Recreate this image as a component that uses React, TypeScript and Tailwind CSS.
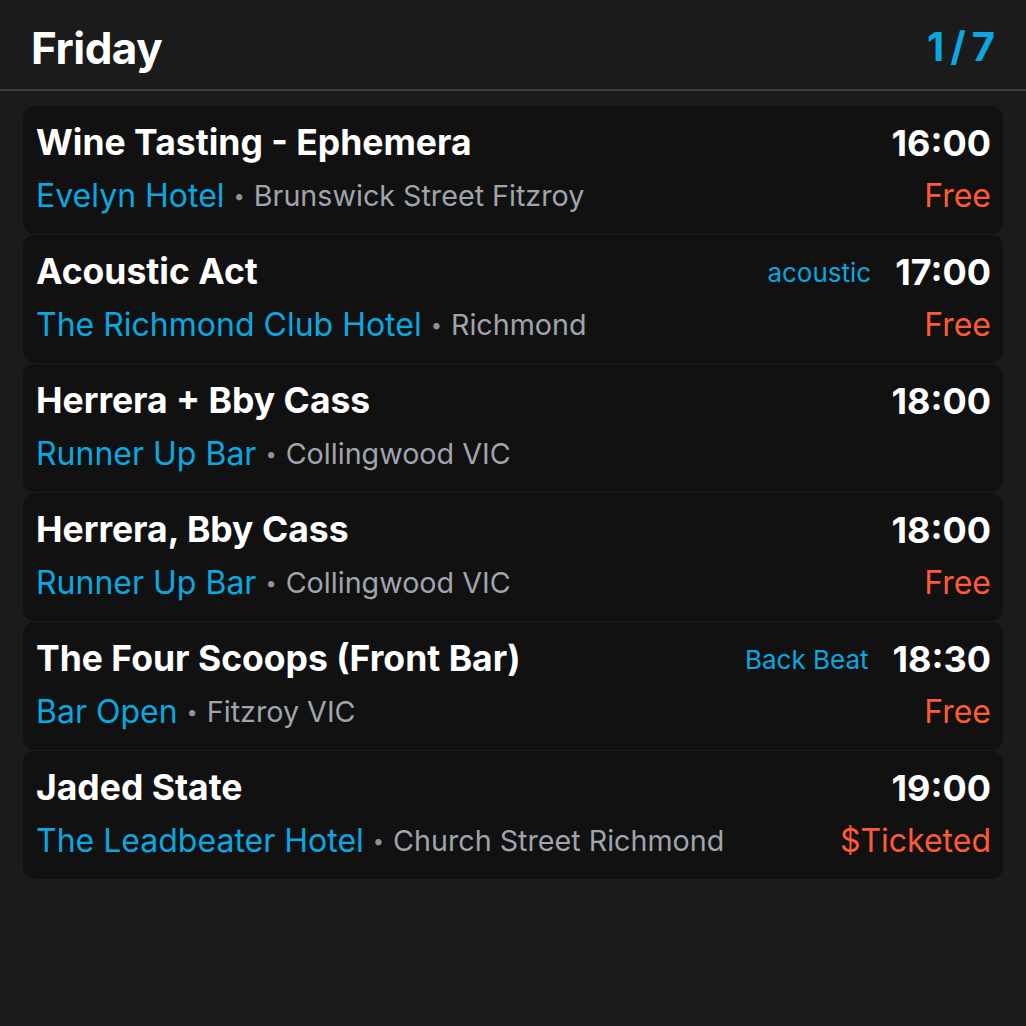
const events = [
  { title: 'Wine Tasting - Ephemera', venue: 'Evelyn Hotel', area: 'Brunswick Street Fitzroy', time: '16:00', price: 'Free' },
  { title: 'Acoustic Act', venue: 'The Richmond Club Hotel', area: 'Richmond', time: '17:00', price: 'Free', tag: 'acoustic' },
  { title: 'Herrera + Bby Cass', venue: 'Runner Up Bar', area: 'Collingwood VIC', time: '18:00', price: '' },
  { title: 'Herrera, Bby Cass', venue: 'Runner Up Bar', area: 'Collingwood VIC', time: '18:00', price: 'Free' },
  { title: 'The Four Scoops (Front Bar)', venue: 'Bar Open', area: 'Fitzroy VIC', time: '18:30', price: 'Free', tag: 'Back Beat' },
  { title: 'Jaded State', venue: 'The Leadbeater Hotel', area: 'Church Street Richmond', time: '19:00', price: '$Ticketed' },
];

export default function App() {
  return (
    <div
      className="w-[1026px] h-[1026px] bg-[#1b1b1b] overflow-hidden"
      style={{ fontFamily: 'Inter, "Noto Sans", sans-serif' }}
    >
      {/* Header */}
      <div className="h-[91px] flex items-center justify-between pl-[31px] pr-[31px] border-b-2 border-[#3a3e47]">
        <h1 className="text-[44px] font-bold text-white tracking-[-0.5px] leading-none pt-[6px]">Friday</h1>
        <div className="flex items-center gap-[6px] text-[40px] font-bold text-[#0aa8e0] leading-none pt-[4px]">
          <span>1</span>
          <span>/</span>
          <span>7</span>
        </div>
      </div>

      {/* Lista */}
      <div className="flex flex-col gap-[1px] px-[23px] pt-[15px]">
        {events.map((e, i) => (
          <div key={i} className="h-[128px] bg-[#111111] rounded-[12px] pl-[13px] pr-[12px] pt-[17px] flex flex-col">
            <div className="flex items-center justify-between h-[40px]">
              <div className="text-[35.5px] font-bold text-white">{e.title}</div>
              <div className="flex items-center gap-[24px]">
                {e.tag && <span className="text-[26px] text-[#0aa8e0]">{e.tag}</span>}
                <span className="text-[36px] font-bold text-white">{e.time}</span>
              </div>
            </div>
            <div className="flex items-center justify-between h-[40px] mt-[13px]">
              <div className="flex items-center">
                <span className="text-[32px] text-[#0aa8e0]">{e.venue}</span>
                <span className="text-[#8e939c] text-[20px] mx-[9px]">•</span>
                <span className="text-[28.7px] text-[#a0a4ad]">{e.area}</span>
              </div>
              {e.price && <span className="text-[32px] text-[#ff5a36]">{e.price}</span>}
            </div>
          </div>
        ))}
      </div>
    </div>
  );
}
